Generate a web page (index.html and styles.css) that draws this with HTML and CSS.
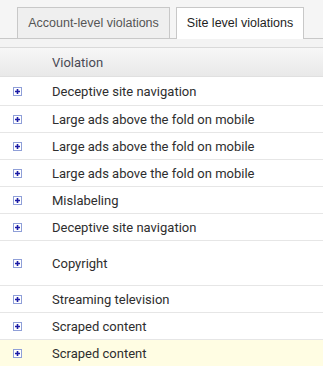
FILE: index.html
```html
<!DOCTYPE html>
<html>
<head>
<meta charset="utf-8">
<link rel="stylesheet" href="styles.css">
</head>
<body>
<div class="tabs">
  <div class="tab">Account-level violations</div>
  <div class="tab active">Site level violations</div>
</div>
<div class="gap"></div>
<div class="header"><span class="col">Violation</span></div>
<div class="rows">
  <div class="row"><svg class="exp" viewBox="0 0 9 9"><rect x="0.5" y="0.5" width="8" height="8"/><path d="M2 4.5H7M4.5 2V7"/></svg><span class="col">Deceptive site navigation</span></div>
  <div class="row"><svg class="exp" viewBox="0 0 9 9"><rect x="0.5" y="0.5" width="8" height="8"/><path d="M2 4.5H7M4.5 2V7"/></svg><span class="col">Large ads above the fold on mobile</span></div>
  <div class="row"><svg class="exp" viewBox="0 0 9 9"><rect x="0.5" y="0.5" width="8" height="8"/><path d="M2 4.5H7M4.5 2V7"/></svg><span class="col">Large ads above the fold on mobile</span></div>
  <div class="row"><svg class="exp" viewBox="0 0 9 9"><rect x="0.5" y="0.5" width="8" height="8"/><path d="M2 4.5H7M4.5 2V7"/></svg><span class="col">Large ads above the fold on mobile</span></div>
  <div class="row"><svg class="exp" viewBox="0 0 9 9"><rect x="0.5" y="0.5" width="8" height="8"/><path d="M2 4.5H7M4.5 2V7"/></svg><span class="col">Mislabeling</span></div>
  <div class="row"><svg class="exp" viewBox="0 0 9 9"><rect x="0.5" y="0.5" width="8" height="8"/><path d="M2 4.5H7M4.5 2V7"/></svg><span class="col">Deceptive site navigation</span></div>
  <div class="row tall"><svg class="exp" viewBox="0 0 9 9"><rect x="0.5" y="0.5" width="8" height="8"/><path d="M2 4.5H7M4.5 2V7"/></svg><span class="col">Copyright</span></div>
  <div class="row"><svg class="exp" viewBox="0 0 9 9"><rect x="0.5" y="0.5" width="8" height="8"/><path d="M2 4.5H7M4.5 2V7"/></svg><span class="col">Streaming television</span></div>
  <div class="row"><svg class="exp" viewBox="0 0 9 9"><rect x="0.5" y="0.5" width="8" height="8"/><path d="M2 4.5H7M4.5 2V7"/></svg><span class="col">Scraped content</span></div>
  <div class="row hl"><svg class="exp" viewBox="0 0 9 9"><rect x="0.5" y="0.5" width="8" height="8"/><path d="M2 4.5H7M4.5 2V7"/></svg><span class="col">Scraped content</span></div>
</div>
</body>
</html>
```
FILE: styles.css
```css
html, body { margin: 0; padding: 0; background: #fff; }
body { font-family: Roboto, "Liberation Sans", sans-serif; font-size: 13px; color: #2e2e2e; }
.tabs {
  display: flex;
  gap: 6px;
  padding: 7px 0 0 17px;
  background: #f5f5f5;
  border-bottom: 1px solid #c8c8c8;
  height: 31px;
  box-sizing: content-box;
}
.tab {
  box-sizing: border-box;
  height: 32px;
  margin-bottom: -1px;
  padding: 0 4px;
  border: 1px solid #c8c8c8;
  border-bottom: none;
  background: #efefef;
  font-family: "Liberation Sans", Arial, sans-serif;
  font-size: 12.5px;
  color: #555;
  white-space: nowrap;
  display: flex;
  align-items: center;
  justify-content: center;
}
.tab:first-child { width: 153px; border-bottom: 1px solid #c8c8c8; padding-bottom: 1px; }
.tab.active { width: 128px; background: #fff; color: #1e1e1e; padding-bottom: 1px; }
.gap { height: 8px; background: #f3f3f3; border-bottom: 1px solid #d9d9d9; }
.header {
  height: 28px;
  display: flex;
  align-items: center;
  background: linear-gradient(#f7f7f7, #e9e9e9);
  color: #4a4a55;
  border-bottom: 1px solid #e0e0e0;
}
.col { margin-left: 52px; padding-top: 1px; }
.row .col { margin-left: 30px; }
.row {
  height: 26px;
  display: flex;
  align-items: center;
  border-bottom: 1px solid #e6e6e6;
  background: #fff;
}
.row:first-child { height: 28px; }
.row.tall { height: 44px; }
.row.hl { background: #fffde3; border-bottom: none; }
.exp {
  width: 9px;
  height: 9px;
  margin-left: 13px;
  flex: none;
}
.exp rect { fill: #fff; stroke: #8f9fd8; stroke-width: 1; }
.exp path { stroke: #1b1ba6; stroke-width: 1.6; fill: none; }
```
